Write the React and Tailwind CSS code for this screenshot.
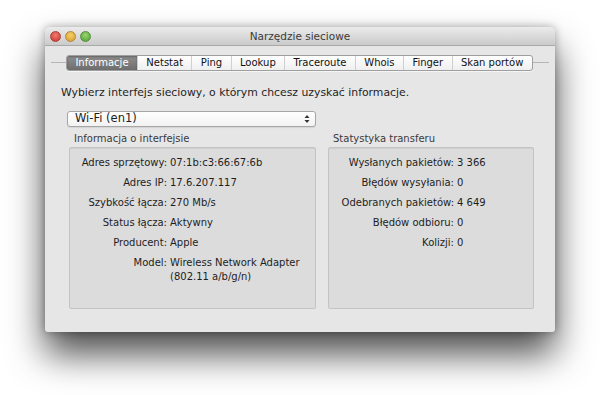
const tabs = ["Informacje", "Netstat", "Ping", "Lookup", "Traceroute", "Whois", "Finger", "Skan portów"];

const ifaceRows = [
  ["Adres sprzętowy:", "07:1b:c3:66:67:6b"],
  ["Adres IP:", "17.6.207.117"],
  ["Szybkość łącza:", "270 Mb/s"],
  ["Status łącza:", "Aktywny"],
  ["Producent:", "Apple"],
  ["Model:", "Wireless Network Adapter\n(802.11 a/b/g/n)"],
];

const statRows = [
  ["Wysłanych pakietów:", "3 366"],
  ["Błędów wysyłania:", "0"],
  ["Odebranych pakietów:", "4 649"],
  ["Błędów odbioru:", "0"],
  ["Kolizji:", "0"],
];

const InfoBox = ({ title, rows, labelWidth, width }) => (
  <div className="flex flex-col" style={{ width }}>
    <div className="pl-[5px] h-[17px] leading-[18px] text-[#3a3a3a]">{title}</div>
    <div className="h-[162px] bg-[#dcdcdc] border border-[#c4c4c4] rounded-[2px] shadow-[inset_0_1px_1px_rgba(0,0,0,0.06)] pt-[5px] flex flex-col">
      {rows.map(([label, value]) => (
        <div key={label} className="flex min-h-[20px] leading-[14px] pt-[3px]">
          <div className="text-right shrink-0" style={{ width: labelWidth }}>
            {label}
          </div>
          <div className="pl-[3px] whitespace-pre-line">{value}</div>
        </div>
      ))}
    </div>
  </div>
);

export default function App() {
  return (
    <div className="w-[600px] h-[395px] bg-white overflow-hidden pt-[27px] pl-[45px] font-['DejaVu_Sans',sans-serif] text-[10px] text-[#1e1e1e]">
      <div className="w-[510px] h-[305px] bg-[#e6e6e6] rounded-t-[5px] rounded-b-[3px] shadow-[0_22px_36px_rgba(0,0,0,0.7),0_0_8px_rgba(0,0,0,0.3)] flex flex-col overflow-hidden">
        <div className="h-[19px] relative flex items-center bg-gradient-to-b from-[#ebebeb] to-[#cbcbcb] border-b border-[#a9a9a9]">
          <div className="flex gap-[4px] pl-[5px] pt-[1px]">
            <span className="w-[11px] h-[11px] rounded-full bg-[radial-gradient(circle_at_50%_35%,#f27a72,#c9332a)] border border-[#a8403a]" />
            <span className="w-[11px] h-[11px] rounded-full bg-[radial-gradient(circle_at_50%_35%,#f4cf6c,#d89b27)] border border-[#b48534]" />
            <span className="w-[11px] h-[11px] rounded-full bg-[radial-gradient(circle_at_50%_35%,#9ad86d,#4c9c34)] border border-[#5a8d3f]" />
          </div>
          <div className="absolute inset-0 flex items-center justify-center pt-[1px] text-[#3b3b3b] text-[10.5px]">
            Narzędzie sieciowe
          </div>
        </div>

        <div className="relative mt-[9px] h-[16px] mx-[6px]">
          <div className="absolute left-0 right-0 top-[7px] h-px bg-[#b5b5b5]" />
          <div className="relative flex ml-[15px] h-[16px] w-fit rounded-[3px] border border-[#9f9f9f] bg-gradient-to-b from-[#ffffff] to-[#efefef] overflow-hidden shadow-[0_1px_0_rgba(255,255,255,0.6)]">
            {tabs.map((t, i) => (
              <div
                key={t}
                className={
                  i === 0
                    ? "px-[8.4px] leading-[14px] text-white bg-gradient-to-b from-[#8e8e8e] to-[#6e6e6e] shadow-[inset_0_1px_2px_rgba(0,0,0,0.3)]"
                    : "px-[8.4px] leading-[14px] text-[#111] border-l border-[#cfcfcf] first:border-l-0"
                }
              >
                {t}
              </div>
            ))}
          </div>
        </div>

        <div className="pl-[16px] mt-[15px] leading-[14px] text-[10.85px]">
          Wybierz interfejs sieciowy, o którym chcesz uzyskać informacje.
        </div>

        <div className="ml-[22px] mt-[11px] w-[249px] h-[16px] rounded-[3px] border border-[#a6a6a6] bg-gradient-to-b from-white to-[#f2f2f2] flex items-center justify-between pl-[7px] pr-[5px] shadow-[0_1px_1px_rgba(0,0,0,0.08)] text-[11.5px]">
          <span>Wi-Fi (en1)</span>
          <svg width="6" height="10" viewBox="0 0 6 10">
            <path d="M3 1 L5.5 4 H0.5 Z" fill="#333" />
            <path d="M3 9 L5.5 6 H0.5 Z" fill="#333" />
          </svg>
        </div>

        <div className="flex ml-[24px] mt-[3px] gap-[12px]">
          <InfoBox title="Informacja o interfejsie" rows={ifaceRows} labelWidth={97} width={247} />
          <InfoBox title="Statystyka transferu" rows={statRows} labelWidth={125} width={206} />
        </div>
      </div>
    </div>
  );
}
